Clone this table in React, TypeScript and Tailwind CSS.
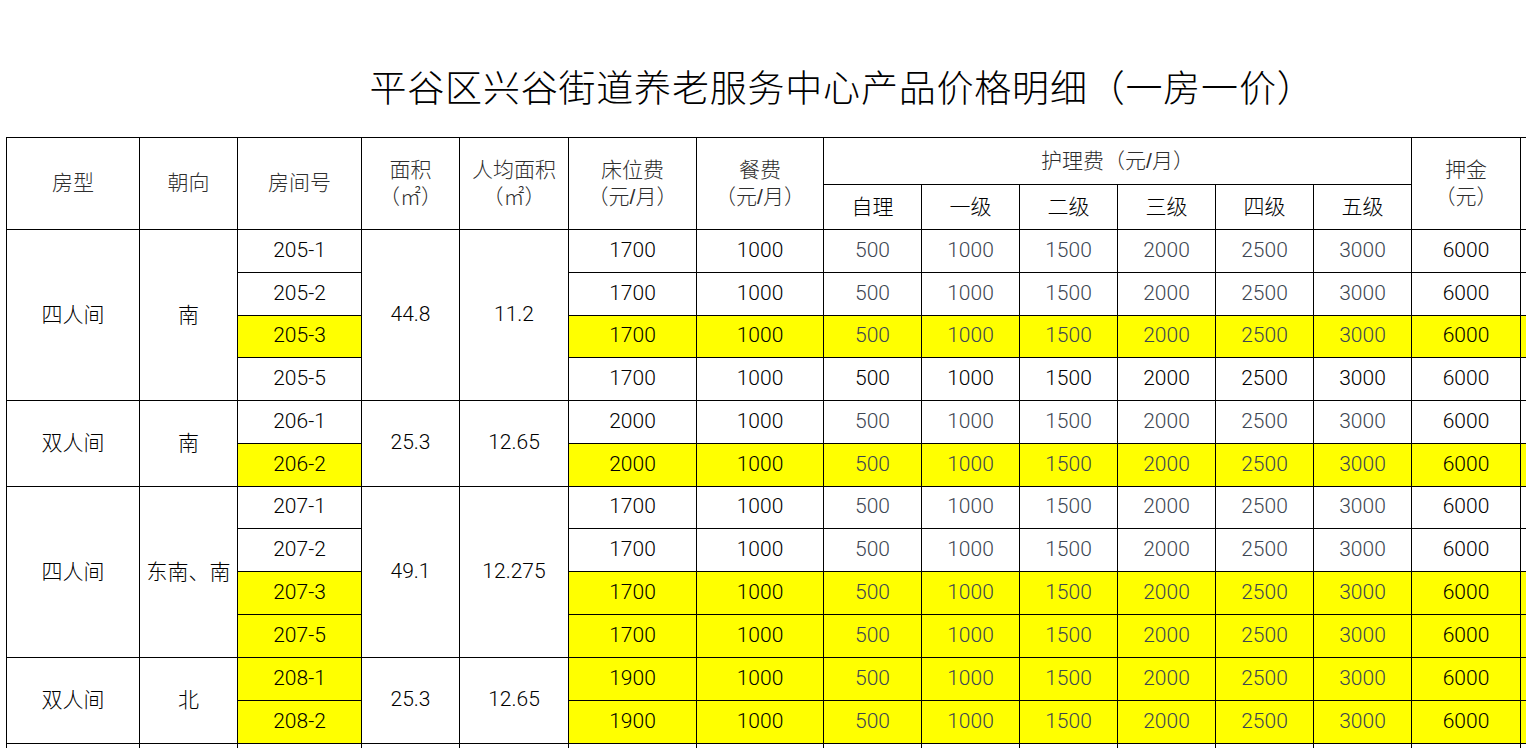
const CARE = [500, 1000, 1500, 2000, 2500, 3000];

type Group = { type: string; dir: string; area: string; per: string; span: number };
type Row = { group?: Group; room: string; bed: number; yellow?: boolean; careBlack?: boolean; h: number };

const rows: Row[] = [
  { group: { type: "四人间", dir: "南", area: "44.8", per: "11.2", span: 4 }, room: "205-1", bed: 1700, h: 43 },
  { room: "205-2", bed: 1700, h: 43 },
  { room: "205-3", bed: 1700, yellow: true, h: 42 },
  { room: "205-5", bed: 1700, careBlack: true, h: 43 },
  { group: { type: "双人间", dir: "南", area: "25.3", per: "12.65", span: 2 }, room: "206-1", bed: 2000, h: 43 },
  { room: "206-2", bed: 2000, yellow: true, h: 43 },
  { group: { type: "四人间", dir: "东南、南", area: "49.1", per: "12.275", span: 4 }, room: "207-1", bed: 1700, h: 42 },
  { room: "207-2", bed: 1700, h: 43 },
  { room: "207-3", bed: 1700, yellow: true, h: 43 },
  { room: "207-5", bed: 1700, yellow: true, h: 43 },
  { group: { type: "双人间", dir: "北", area: "25.3", per: "12.65", span: 2 }, room: "208-1", bed: 1900, yellow: true, h: 43 },
  { room: "208-2", bed: 1900, yellow: true, h: 43 },
];

const widths = [133, 98, 124, 98, 109, 128, 127, 98, 98, 98, 98, 98, 98, 109, 136];

const cell = "border border-black text-center align-middle p-0";
// 数字列用细体
const num = "font-['Roboto','Liberation_Sans',sans-serif] font-light text-[21px] leading-[27px] pb-[2px]";
const cjk = "font-light text-[21px] leading-[27px] pb-[2px]";

export default function App() {
  return (
    <div className="w-[1526px] h-[748px] overflow-hidden bg-white font-['Liberation_Sans','Noto_Sans_CJK_SC',sans-serif]">
      <div className="w-[1656px]">
        {/* 标题 */}
        <div className="h-[137px] pt-[66px] pl-[28px] text-center text-[37px] font-light leading-[48px] tracking-[0.8px] text-black font-['Liberation_Serif','Noto_Sans_CJK_SC',serif]">
          平谷区兴谷街道养老服务中心产品价格明细（一房一价）
        </div>

        <table className="ml-[6px] table-fixed border-collapse w-[1650px]">
          <colgroup>
            {widths.map((w, i) => (
              <col key={i} style={{ width: w }} />
            ))}
          </colgroup>
          <thead className="text-[#2e2e2e]">
            <tr className="h-[47px]">
              <th rowSpan={2} className={`${cell} ${cjk}`}>房型</th>
              <th rowSpan={2} className={`${cell} ${cjk}`}>朝向</th>
              <th rowSpan={2} className={`${cell} ${cjk}`}>房间号</th>
              <th rowSpan={2} className={`${cell} ${cjk}`}>
                面积
                <br />（㎡）
              </th>
              <th rowSpan={2} className={`${cell} ${cjk}`}>
                人均面积
                <br />（㎡）
              </th>
              <th rowSpan={2} className={`${cell} ${cjk}`}>
                床位费
                <br />（元/月）
              </th>
              <th rowSpan={2} className={`${cell} ${cjk}`}>
                餐费
                <br />（元/月）
              </th>
              <th colSpan={6} className={`${cell} ${cjk}`}>护理费（元/月）</th>
              <th rowSpan={2} className={`${cell} ${cjk}`}>
                押金
                <br />（元）
              </th>
              <th rowSpan={2} className={cell}></th>
            </tr>
            <tr className="h-[45px] text-black">
              {["自理", "一级", "二级", "三级", "四级", "五级"].map((t) => (
                <th key={t} className={`${cell} ${cjk}`}>{t}</th>
              ))}
            </tr>
          </thead>
          <tbody className="text-black">
            {rows.map((r) => {
              const y = r.yellow ? "bg-[#ffff00]" : "";
              const careColor = r.careBlack ? "text-black" : "text-[#3d4652]";
              return (
                <tr key={r.room} style={{ height: r.h }}>
                  {r.group && (
                    <>
                      <td rowSpan={r.group.span} className={`${cell} ${cjk}`}>{r.group.type}</td>
                      <td rowSpan={r.group.span} className={`${cell} ${cjk}`}>{r.group.dir}</td>
                    </>
                  )}
                  <td className={`${cell} ${num} ${y}`}>{r.room}</td>
                  {r.group && (
                    <>
                      <td rowSpan={r.group.span} className={`${cell} ${num}`}>{r.group.area}</td>
                      <td rowSpan={r.group.span} className={`${cell} ${num}`}>{r.group.per}</td>
                    </>
                  )}
                  <td className={`${cell} ${num} ${y}`}>{r.bed}</td>
                  <td className={`${cell} ${num} ${y}`}>1000</td>
                  {CARE.map((c) => (
                    <td key={c} className={`${cell} ${num} ${y} ${careColor}`}>{c}</td>
                  ))}
                  <td className={`${cell} ${num} ${y}`}>6000</td>
                  <td className={`${cell} ${y}`}></td>
                </tr>
              );
            })}
            <tr className="h-[43px]">
              {widths.map((_, i) => (
                <td key={i} className={cell}></td>
              ))}
            </tr>
          </tbody>
        </table>
      </div>
    </div>
  );
}
